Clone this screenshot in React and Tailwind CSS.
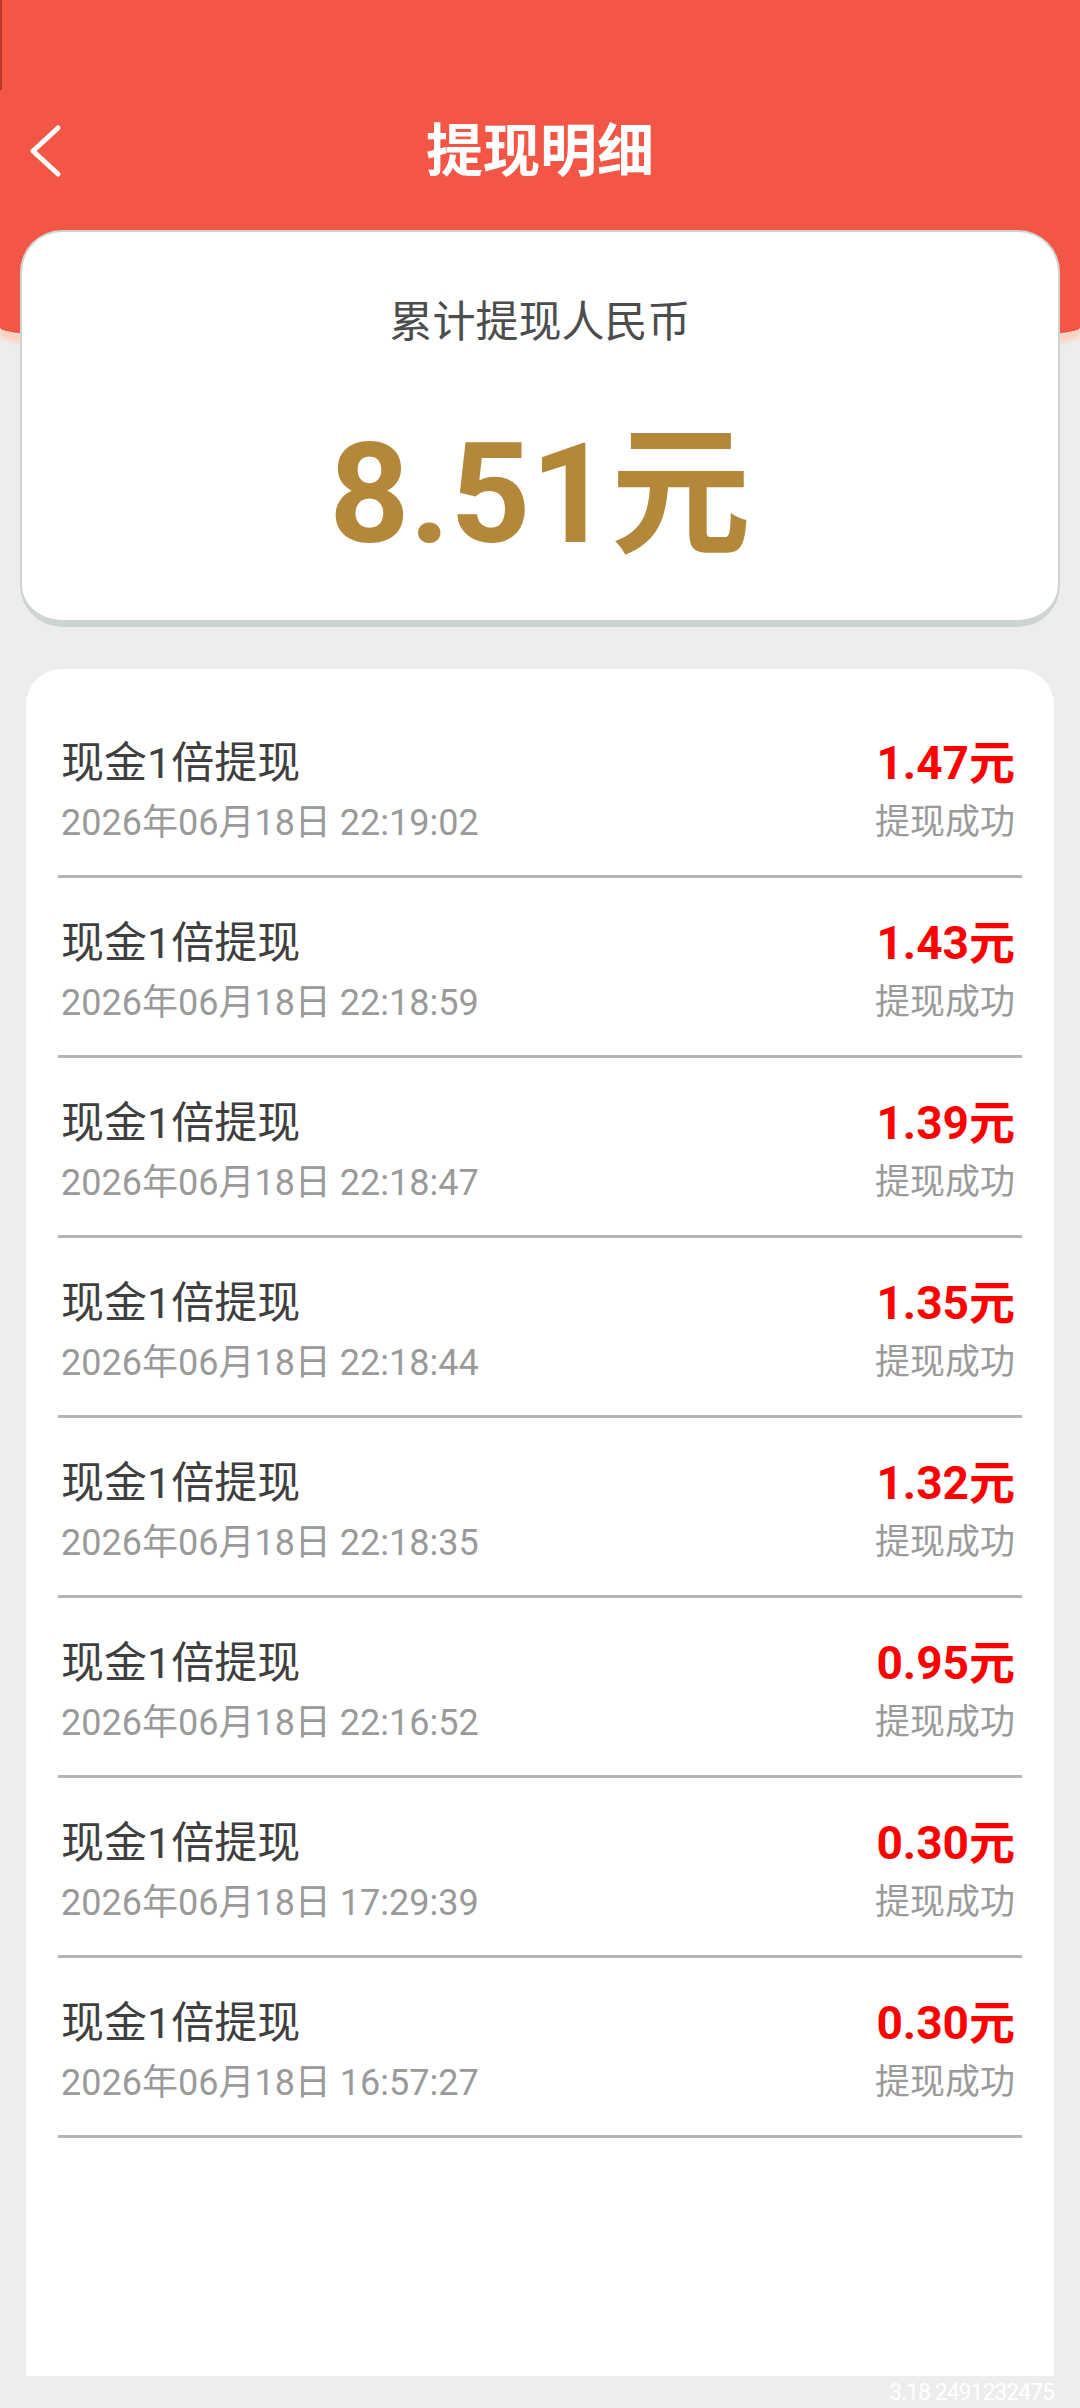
import React from 'react';

const records = [
    { amount: '1.47', time: '2026年06月18日 22:19:02' },
    { amount: '1.43', time: '2026年06月18日 22:18:59' },
    { amount: '1.39', time: '2026年06月18日 22:18:47' },
    { amount: '1.35', time: '2026年06月18日 22:18:44' },
    { amount: '1.32', time: '2026年06月18日 22:18:35' },
    { amount: '0.95', time: '2026年06月18日 22:16:52' },
    { amount: '0.30', time: '2026年06月18日 17:29:39' },
    { amount: '0.30', time: '2026年06月18日 16:57:27' },
];

const font = { fontFamily: 'Roboto, "Noto Sans CJK SC", sans-serif' };

const BackIcon = () => (
    <svg width="40" height="56" viewBox="0 0 40 56" fill="none">
        <path d="M30 5 L5 28 L30 51" stroke="#fff" strokeWidth="5" strokeLinecap="round" strokeLinejoin="round" />
    </svg>
);

const RecordRow = ({ amount, time }) => (
    <div className="mx-[32px] border-b-[3px] border-[#b5b5b5] pt-[40px] pb-[32px] pl-[3px] pr-[7px] flex justify-between">
        <div className="flex flex-col">
            <span className="text-[43px] leading-[50px] text-[#3f3f3f]">现金1倍提现</span>
            <span className="mt-[15px] text-[36px] leading-[40px] text-[#9a9a9a]">{time}</span>
        </div>
        <div className="flex flex-col items-end">
            <span className="text-[46px] leading-[50px] font-bold text-[#ff0000]">{amount}元</span>
            <span className="mt-[15px] text-[35px] leading-[40px] text-[#9a9a9a]">提现成功</span>
        </div>
    </div>
);

export default function App() {
    return (
        <div className="relative w-[1080px] min-h-[2408px] bg-[#eeeded] overflow-hidden flex flex-col" style={font}>
            {/* red header background */}
            <div className="absolute top-0 left-0 w-full h-[352px] bg-[#f45646] border-b-[3px] border-white rounded-b-[50%_24px] shadow-[0_8px_4px_#fbd2bd]" />
            <div className="absolute top-0 left-0 w-[2px] h-[90px] bg-[#b8382c]" />

            <div className="relative h-[91px]" />
            <div className="relative h-[120px] flex items-center justify-center">
                <div className="absolute left-[28px] top-[32px]">
                    <BackIcon />
                </div>
                <h1 className="text-[57px] font-bold text-white leading-none">提现明细</h1>
            </div>

            {/* summary card */}
            <div className="relative mt-[19px] mx-[20px] h-[397px] bg-white rounded-[42px] border-2 border-b-[7px] border-[#cdd5d2] flex flex-col items-center">
                <span className="mt-[62px] text-[43px] leading-[56px] text-[#4d4d4d]">累计提现人民币</span>
                <span className="mt-[64px] text-[140px] leading-[160px] font-bold text-[#b4883a]">8.51元</span>
            </div>

            {/* list card */}
            <div className="relative mt-[42px] mx-[26px] h-[1707px] bg-white rounded-t-[36px] pt-[29px]">
                {records.map((r, i) => (
                    <RecordRow key={i} amount={r.amount} time={r.time} />
                ))}
            </div>

            <div className="relative h-[32px] flex justify-end items-center pr-[26px]">
                <span className="text-[23px] leading-none text-white tracking-[-1px]">3.18 2491232475</span>
            </div>
        </div>
    );
}
